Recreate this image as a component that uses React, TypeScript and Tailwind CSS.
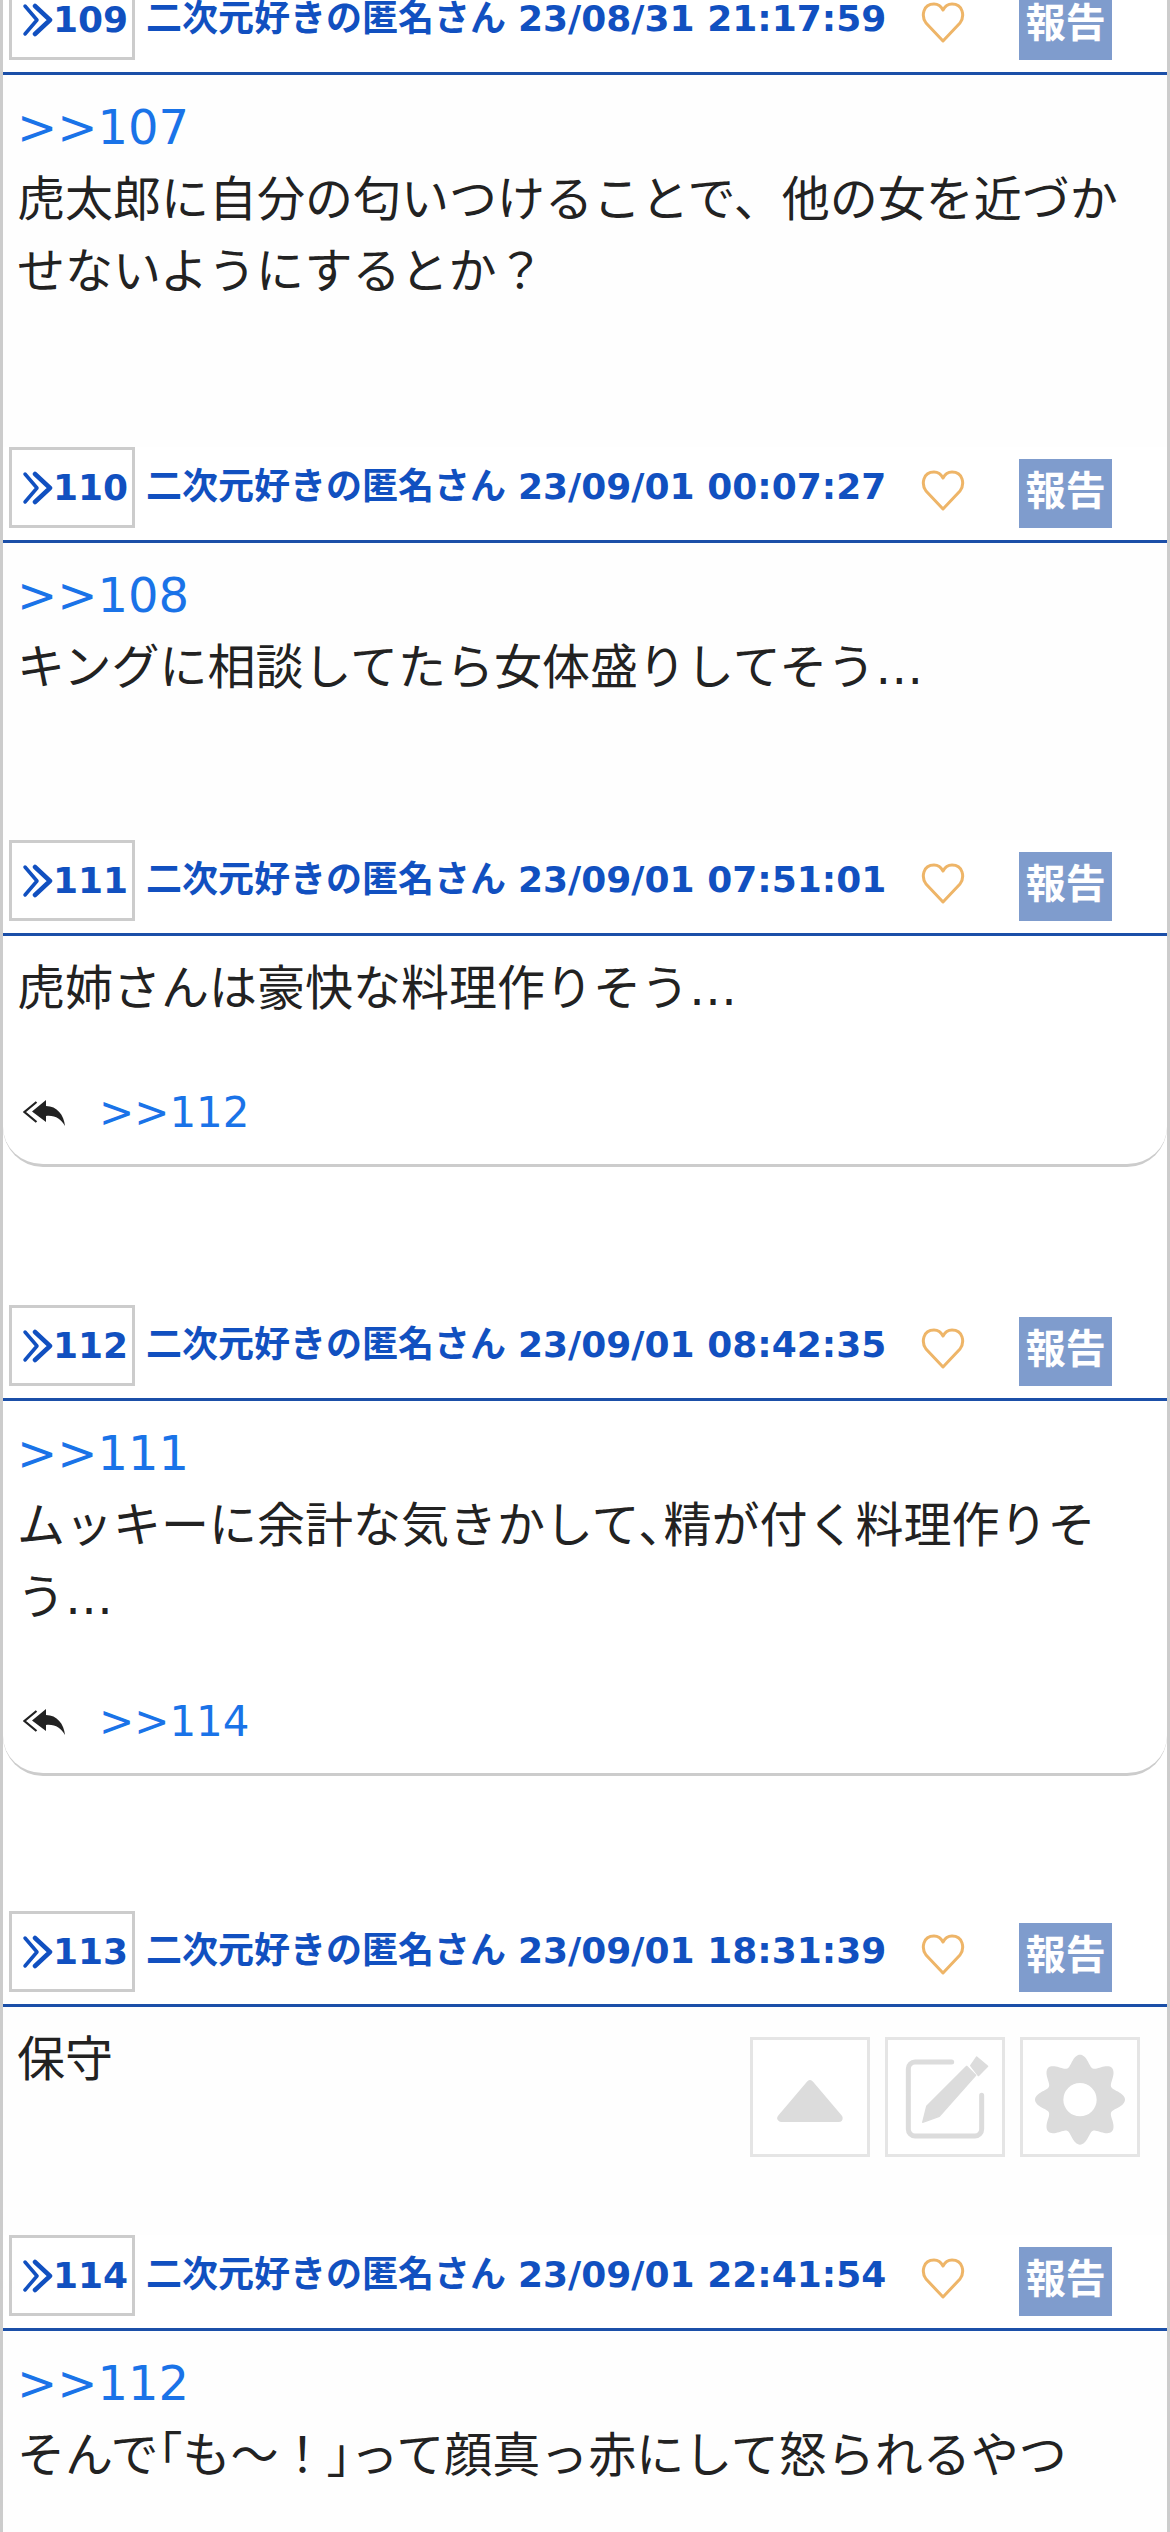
import React from 'react';

const gearPath = (() => {
    const pts: string[] = [];
    for (let i = 0; i < 240; i++) {
        const t = (i / 240) * Math.PI * 2;
        const r = 118 + 17 * Math.cos(8 * t);
        pts.push(`${(180 + r * Math.sin(t)).toFixed(1)} ${(188 - r * Math.cos(t)).toFixed(1)}`);
    }
    return `M${pts.join('L')}Z M230 188a50 50 0 1 0 -100 0a50 50 0 1 0 100 0Z`;
})();

const HeartIcon = () => (
    <svg viewBox="0 0 44 46" className="w-[44px] h-[46px]" fill="none" stroke="#eeb568" strokeWidth="3" strokeLinejoin="round">
        <path d="M22 40 L5 22 C0 15 2 3 13 3 C17 3 20 5 22 9 C24 5 27 3 31 3 C42 3 44 15 39 22 Z" />
    </svg>
);

const ReplyIcon = () => (
    <svg viewBox="0 0 42 26" className="w-[42px] h-[26px]" fill="#222222">
        <path d="M13.5 2 L1.5 12 L13.5 22" fill="none" stroke="#222222" strokeWidth="2.2" />
        <path d="M23 0 L9 11.5 L23 22 V16 C32 15 38 19 42 26 C41 15 34 6 23 6 Z" />
    </svg>
);

const ChevronsIcon = () => (
    <svg viewBox="0 0 31 34" className="w-[31px] h-[34px] shrink-0" fill="none" stroke="#1150c0" strokeLinecap="round" strokeLinejoin="round">
        <path d="M3 3 L15 17 L3 31" strokeWidth="3.5" />
        <path d="M13 3 L28 17 L13 31" strokeWidth="4.5" />
    </svg>
);

interface PostProps {
    no: number;
    date: string;
    first?: boolean;
    anchor?: string;
    lines: string[];
    reply?: string;
    tail?: string;
}

const Post: React.FC<PostProps> = ({ no, date, first, anchor, lines, reply, tail }) => (
    <div className={first ? '-mt-[21px]' : ''}>
        {/* Header */}
        <div className="flex items-start h-[96px] pl-[6px] border-b-[3px] border-[#1b4fa8] font-bold text-[36px] leading-[79px] text-[#1150c0]">
            <div className="flex items-center w-[126px] h-[81px] border-[3px] border-[#cccccc] pl-[10px] whitespace-nowrap">
                <ChevronsIcon />
                <span className="leading-none">{no}</span>
            </div>
            <span className="ml-[11px] whitespace-nowrap">二次元好きの匿名さん</span>
            <span className="ml-[12px] whitespace-nowrap">{date}</span>
            <div className="ml-[35px] mt-[22px]"><HeartIcon /></div>
            <div className="ml-[54px] mt-[12px] w-[93px] h-[69px] bg-[#7f9ccd] text-white text-center text-[40px] leading-[64px]">報告</div>
        </div>
        {/* Body */}
        {reply ? (
            <div className="bg-white rounded-b-[40px] border-b-[3px] border-[#cccccc] pt-[16px] px-[14px] pb-[26px] text-[48px] leading-[72px] text-[#222222]">
                {anchor && <div className="text-[#1a73e8]">{anchor}</div>}
                {lines.map((l) => <div key={l}>{l}</div>)}
                <div className="flex items-center mt-[64px] h-[50px] pl-[6px] text-[42px] text-[#1a73e8]">
                    <ReplyIcon />
                    <span className="ml-[34px]">{reply}</span>
                </div>
            </div>
        ) : (
            <div className={`bg-[#fefefe] pt-[16px] px-[14px] text-[48px] leading-[72px] text-[#222222] ${tail}`}>
                {anchor && <div className="text-[#1a73e8]">{anchor}</div>}
                {lines.map((l) => <div key={l}>{l}</div>)}
            </div>
        )}
    </div>
);

export default function App() {
    return (
        <div className="relative h-[2532px] overflow-hidden bg-white border-x-[3px] border-[#cccccc] font-['DejaVu_Sans','Noto_Sans_CJK_JP',sans-serif]">
            <Post first no={109} date="23/08/31 21:17:59" anchor=">>107" lines={['虎太郎に自分の匂いつけることで、他の女を近づか', 'せないようにするとか？']} tail="pb-[140px]" />
            <Post no={110} date="23/09/01 00:07:27" anchor=">>108" lines={['キングに相談してたら女体盛りしてそう…']} tail="pb-[137px]" />
            <Post no={111} date="23/09/01 07:51:01" lines={['虎姉さんは豪快な料理作りそう…']} reply=">>112" />
            <div className="h-[138px]" />
            <Post no={112} date="23/09/01 08:42:35" anchor=">>111" lines={['ムッキーに余計な気きかして､精が付く料理作りそ', 'う…']} reply=">>114" />
            <div className="h-[135px]" />
            <Post no={113} date="23/09/01 18:31:39" lines={['保守']} tail="pb-[140px]" />
            <Post no={114} date="23/09/01 22:41:54" anchor=">>112" lines={['そんで｢も～！｣って顔真っ赤にして怒られるやつ']} tail="pb-[60px]" />

            {/* Floating buttons */}
            <div className="absolute left-[747px] top-[2037px] flex gap-[15px]">
                <div className="w-[120px] h-[120px] border-[3px] border-[#e5e5e5] bg-white">
                    <svg viewBox="9 9 342 342" className="w-full h-full">
                        <path d="M180 142 L94 243 H266 Z" fill="#dcdcdc" stroke="#dcdcdc" strokeWidth="24" strokeLinejoin="round" />
                    </svg>
                </div>
                <div className="w-[120px] h-[120px] border-[3px] border-[#e5e5e5] bg-white">
                    <svg viewBox="9 9 342 342" className="w-full h-full">
                        <path d="M200 75 H90 a20 20 0 0 0 -20 20 V277 a20 20 0 0 0 20 20 H270 a20 20 0 0 0 20 -20 V175" fill="none" stroke="#dcdcdc" strokeWidth="15" strokeLinecap="round" />
                        <path d="M125 208 L245 88 L272 115 L163 238 L113 256 Z M275 60 L308 88 L280 116 L257 86 Z" fill="#dcdcdc" stroke="#dcdcdc" strokeWidth="4" strokeLinejoin="round" />
                    </svg>
                </div>
                <div className="w-[120px] h-[120px] border-[3px] border-[#e5e5e5] bg-white">
                    <svg viewBox="9 9 342 342" className="w-full h-full">
                        <path d={gearPath} fill="#dcdcdc" fillRule="evenodd" />
                    </svg>
                </div>
            </div>
        </div>
    );
}
